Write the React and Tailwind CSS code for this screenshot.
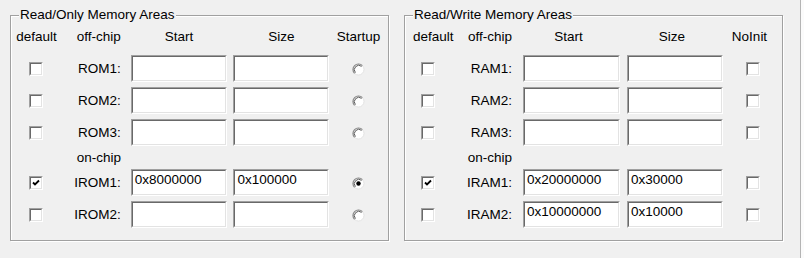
const font = { fontFamily: '"Liberation Sans", Arial, sans-serif' };

function Field({ value, w }) {
  return (
    <div
      className={`${w} h-[27px] border border-t-[#a0a0a0] border-l-[#a0a0a0] border-b-white border-r-white`}
    >
      <div className="h-full border border-t-[#696969] border-l-[#696969] border-b-[#e3e3e3] border-r-[#e3e3e3] bg-white pl-[2px] pt-[1px] leading-[16px] text-[13.5px] text-black">
        {value}
      </div>
    </div>
  );
}

function Check({ checked }) {
  return (
    <div className="w-[14px] h-[14px] border border-t-[#a0a0a0] border-l-[#a0a0a0] border-b-white border-r-white">
      <div className="w-full h-full border border-t-[#696969] border-l-[#696969] border-b-[#e3e3e3] border-r-[#e3e3e3] bg-white flex items-center justify-center">
        {checked && (
          <svg width="8" height="8" viewBox="0 0 8 8">
            <path d="M1 3.5 L3 5.5 L7 1.5" stroke="#000" strokeWidth="1.8" fill="none" />
          </svg>
        )}
      </div>
    </div>
  );
}

function Radio({ checked }) {
  return (
    <svg width="13" height="13" viewBox="0 0 13 13" className="mt-[2px]">
      <circle cx="6.5" cy="6.5" r="5.5" fill="#ffffff" stroke="#e3e3e3" strokeWidth="1" />
      <path d="M2.6 10.4 A5.5 5.5 0 0 1 10.4 2.6" stroke="#8a8a8a" strokeWidth="1.2" fill="none" />
      <path d="M3.4 9.6 A4.4 4.4 0 0 1 9.6 3.4" stroke="#5a5a5a" strokeWidth="1" fill="none" />
      {checked && <circle cx="6.5" cy="6.5" r="2.2" fill="#000" />}
    </svg>
  );
}

function Row({ g, label, def, start, size, last }) {
  return (
    <div className="flex items-center h-[27px]">
      <div className={`${g.c1} flex ${g.chk}`}>
        <Check checked={def} />
      </div>
      <div className={`${g.c2} text-right leading-[16px]`}>{label}</div>
      <div className={g.gap1} />
      <Field value={start} w="w-[97px]" />
      <div className={g.gap2} />
      <Field value={size} w="w-[96px]" />
      <div className={`${g.c3} flex justify-center`}>
        {g.radio ? <Radio checked={last} /> : <Check checked={last} />}
      </div>
    </div>
  );
}

function Group({ g, title, lastHead, rows }) {
  return (
    <div className={`${g.w} h-[226px] border border-[#a0a0a0] shadow-[inset_1px_1px_0_#ffffff,1px_1px_0_#ffffff]`}>
      <div className="-mt-[9px] ml-[8px] w-fit px-[1px] bg-[#f0f0f0] leading-[16px]">{title}</div>
      <div className="flex items-center mt-[6px] leading-[16px]">
        <div className={`${g.c1} ${g.defHead}`}>default</div>
        <div className={`${g.c2} text-right ${g.offPad}`}>off-chip</div>
        <div className={g.gap1} />
        <div className="w-[97px] text-center">Start</div>
        <div className={g.gap2} />
        <div className="w-[96px] text-center">Size</div>
        <div className={`${g.c3} text-center`}>{lastHead}</div>
      </div>
      <div className="mt-[10px] flex flex-col gap-[5px]">
        {rows.slice(0, 3).map((r) => (
          <Row key={r.label} g={g} {...r} />
        ))}
      </div>
      <div className="flex h-[23px] items-center leading-[16px]">
        <div className={g.c1} />
        <div className={`${g.c2} text-right ${g.offPad}`}>on-chip</div>
      </div>
      <div className="flex flex-col gap-[5px]">
        {rows.slice(3).map((r) => (
          <Row key={r.label} g={g} {...r} />
        ))}
      </div>
    </div>
  );
}

const left = {
  w: "w-[379px]",
  c1: "w-[51px]",
  c2: "w-[59px]",
  c3: "w-[59px]",
  gap1: "w-[10px]",
  gap2: "w-[6px]",
  chk: "justify-center",
  defHead: "text-center",
  offPad: "pr-0",
  radio: true,
};

const right = {
  w: "w-[379px]",
  c1: "w-[50px]",
  c2: "w-[57px]",
  c3: "w-[59px]",
  gap1: "w-[11px]",
  gap2: "w-[7px]",
  chk: "pl-[16px]",
  defHead: "pl-[8px]",
  offPad: "-mr-[3px]",
  radio: false,
};

const romRows = [
  { label: "ROM1:", def: false, start: "", size: "", last: false },
  { label: "ROM2:", def: false, start: "", size: "", last: false },
  { label: "ROM3:", def: false, start: "", size: "", last: false },
  { label: "IROM1:", def: true, start: "0x8000000", size: "0x100000", last: true },
  { label: "IROM2:", def: false, start: "", size: "", last: false },
];

const ramRows = [
  { label: "RAM1:", def: false, start: "", size: "", last: false },
  { label: "RAM2:", def: false, start: "", size: "", last: false },
  { label: "RAM3:", def: false, start: "", size: "", last: false },
  { label: "IRAM1:", def: true, start: "0x20000000", size: "0x30000", last: false },
  { label: "IRAM2:", def: false, start: "0x10000000", size: "0x10000", last: false },
];

export default function App() {
  return (
    <div className="flex w-[804px] h-[258px] bg-[#f0f0f0] text-[13.5px] text-black" style={font}>
      <div className="w-[800px] h-full pt-[15px] pl-[10px] flex gap-[15px]">
        <Group g={left} title="Read/Only Memory Areas" lastHead="Startup" rows={romRows} />
        <Group g={right} title="Read/Write Memory Areas" lastHead="NoInit" rows={ramRows} />
      </div>
      <div className="w-px h-full bg-[#b4b4b4]" />
      <div className="flex-1 h-full bg-[#fbfbfb]" />
    </div>
  );
}
